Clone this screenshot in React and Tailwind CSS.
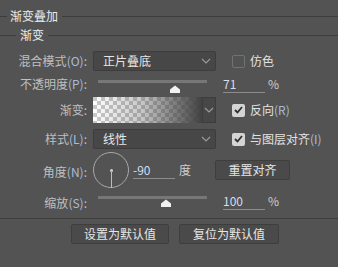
const FONT = "font-['Noto_Sans_CJK_SC','Noto_Sans',sans-serif]";

function Key({ k }) {
  return <span className="text-[#a9bcd9]">({k})</span>;
}

function Chevron() {
  return (
    <svg width="10" height="6" viewBox="0 0 10 6" className="shrink-0">
      <path d="M1 1l4 4 4-4" fill="none" stroke="#9a9a9a" strokeWidth="1.2" />
    </svg>
  );
}

function Select({ value }) {
  return (
    <div className="flex h-[20px] w-[123px] items-center justify-between rounded-[2px] border border-[#3d3d3d] bg-[#474747] pl-[9px] pr-[4px]">
      <span className="text-[12px] leading-none text-[#e6e6e6]">{value}</span>
      <Chevron />
    </div>
  );
}

function Check({ checked, children }) {
  return (
    <div className="ml-[10px] flex items-center gap-[5px]">
      {checked ? (
        <div className="flex h-[13px] w-[13px] items-center justify-center rounded-[2px] bg-[#d4d4d4]">
          <svg width="9" height="8" viewBox="0 0 9 8">
            <path d="M1 4l2.5 2.5L8 1" fill="none" stroke="#2e2e2e" strokeWidth="1.8" />
          </svg>
        </div>
      ) : (
        <div className="h-[13px] w-[13px] rounded-[2px] border border-[#727272]" />
      )}
      <span className="text-[12px] leading-none text-[#e2e2e2]">{children}</span>
    </div>
  );
}

function Label({ children }) {
  return (
    <div className="w-[87px] shrink-0 text-right text-[12px] leading-none text-[#bfbfbf]">
      {children}
    </div>
  );
}

function Thumb() {
  return (
    <svg width="12" height="8" viewBox="0 0 12 8">
      <path d="M6 0.5L11 4.5V8H1V4.5Z" fill="#f2f2f2" />
    </svg>
  );
}

// underlined number field with its unit beside it
function Field({ value, unit, gap }) {
  return (
    <div className="flex items-start">
      <div className="h-[15px] w-[42px] border-b border-[#8c8c8c] text-[12px] leading-none text-[#d2def0]">
        {value}
      </div>
      <span className={`${gap} text-[12px] leading-none text-[#cfcfcf]`}>{unit}</span>
    </div>
  );
}

function Rule({ left }) {
  return <div className={`h-px bg-[#3d3d3d] ${left}`} />;
}

function Button({ children, width }) {
  return (
    <div className={`flex h-[20px] ${width} items-center justify-center rounded-[2px] border border-[#3e3e3e] bg-[#4a4a4a] text-[12px] leading-none text-[#e6e6e6]`}>
      {children}
    </div>
  );
}

export default function App() {
  return (
    <div className={`h-[267px] w-[338px] overflow-hidden bg-[#535353] ${FONT}`}>
      <div className="mt-[9px] flex h-[14px] items-center">
        <Rule left="w-[7px]" />
        <span className="ml-[3px] text-[12px] leading-none text-[#ececec]">渐变叠加</span>
        <Rule left="ml-[4px] flex-1" />
      </div>
      <div className="mt-[5px] flex h-[14px] items-center">
        <Rule left="w-[16px]" />
        <span className="ml-[4px] text-[12px] leading-none text-[#ececec]">渐变</span>
        <Rule left="ml-[4px] flex-1" />
      </div>

      <div className="mt-[9px] flex h-[20px] items-center gap-[6px]">
        <Label>混合模式<Key k="O" />:</Label>
        <Select value="正片叠底" />
        <Check>仿色</Check>
      </div>

      <div className="mt-[3px] flex h-[20px] items-start gap-[6px]">
        <div className="pt-[4px]"><Label>不透明度<Key k="P" />:</Label></div>
        <div className="w-[123px] pl-[5px] pt-[6px]">
          <div className="relative h-[3px] w-[109px] bg-[#777777]">
            <div className="absolute left-[71px] top-[5px]"><Thumb /></div>
          </div>
        </div>
        <div className="ml-[1px] pt-[4px]">
          <Field value="71" unit="%" gap="ml-[3px]" />
        </div>
      </div>

      <div className="mt-[3px] flex h-[26px] items-center gap-[6px]">
        <Label>渐变:</Label>
        <div className="flex h-[26px] w-[123px]">
          <div className="h-full w-[109px] bg-[image:repeating-conic-gradient(#ffffff_0_25%,#c9c9c9_0_50%)] bg-[length:8px_8px]">
            <div className="h-full w-full bg-[linear-gradient(to_right,rgba(70,70,70,0)_0%,rgba(70,70,70,0.3)_45%,#424242_100%)]" />
          </div>
          <div className="flex flex-1 items-center justify-center border border-[#3d3d3d] bg-[#474747]">
            <Chevron />
          </div>
        </div>
        <Check checked>反向<Key k="R" /></Check>
      </div>

      <div className="mt-[6px] flex h-[20px] items-center gap-[6px]">
        <Label>样式<Key k="L" />:</Label>
        <Select value="线性" />
        <Check checked>与图层对齐<Key k="I" /></Check>
      </div>

      <div className="mt-[3px] flex h-[36px] items-center gap-[6px]">
        <div className="pt-[4px]"><Label>角度<Key k="N" />:</Label></div>
        <div className="relative h-[36px] w-[36px] shrink-0 rounded-full border border-[#a8a8a8]">
          <div className="absolute left-[16px] top-[16px] h-[3px] w-[3px] rounded-full bg-[#d8d8d8]" />
          <div className="absolute left-[17px] top-[17px] h-[18px] w-px bg-[#bdbdbd]" />
        </div>
        <div className="ml-[-2px] pt-[2px]">
          <Field value="-90" unit="度" gap="ml-[4px]" />
        </div>
        <div className="ml-[18px]">
          <Button width="w-[75px]">重置对齐</Button>
        </div>
      </div>

      <div className="mt-[5px] flex h-[18px] items-start gap-[6px]">
        <div className="pt-[4px]"><Label>缩放<Key k="S" />:</Label></div>
        <div className="w-[123px] pl-[5px] pt-[3px]">
          <div className="relative h-[3px] w-[109px] bg-[#777777]">
            <div className="absolute left-[62px] top-[3px]"><Thumb /></div>
          </div>
        </div>
        <div className="ml-[1px] pt-[2px]">
          <Field value="100" unit="%" gap="ml-[3px]" />
        </div>
      </div>

      <div className="mt-[7px] h-px bg-[#3d3d3d]" />

      <div className="mt-[5px] flex gap-[10px] pl-[71px]">
        <Button width="w-[98px]">设置为默认值</Button>
        <Button width="w-[100px]">复位为默认值</Button>
      </div>
    </div>
  );
}
